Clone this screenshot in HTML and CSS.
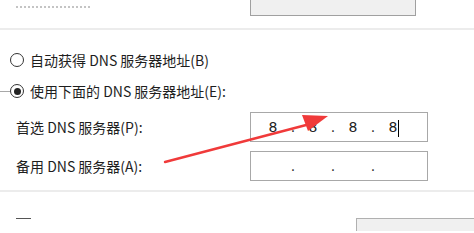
FILE: index.html
```html
<!DOCTYPE html>
<html lang="zh-CN">
<head>
    <meta charset="UTF-8">
    <title>DNS 设置</title>
    <link rel="stylesheet" href="styles.css">
</head>
<body>
    <div class="dialog">
        <!-- 上一组（被截掉的部分） -->
        <div class="top-row">
            <div class="top-label"><span class="faint"></span></div>
            <div class="top-box"></div>
        </div>
        <div class="divider"></div>

        <section class="dns-group">
            <label class="radio-row">
                <span class="radio"></span>
                <span>自动获得 DNS 服务器地址(B)</span>
            </label>
            <label class="radio-row legend">
                <span class="radio checked"></span>
                <span>使用下面的 DNS 服务器地址(E):</span>
            </label>

            <div class="field-row">
                <div class="field-label">首选 DNS 服务器(P):</div>
                <div class="ip-box">
                    <span class="oct">8</span><span class="dot">.</span>
                    <span class="oct">8</span><span class="dot">.</span>
                    <span class="oct">8</span><span class="dot">.</span>
                    <span class="oct">8<i class="caret"></i></span>
                </div>
            </div>
            <div class="field-row">
                <div class="field-label">备用 DNS 服务器(A):</div>
                <div class="ip-box">
                    <span class="oct"></span><span class="dot">.</span>
                    <span class="oct"></span><span class="dot">.</span>
                    <span class="oct"></span><span class="dot">.</span>
                    <span class="oct"></span>
                </div>
            </div>

            <!-- 红色箭头标注 -->
            <svg class="arrow" width="474" height="233" viewBox="0 0 474 233">
                <path d="M165 162 L310 124" stroke="#f03a3a" stroke-width="2.4" stroke-linecap="round" fill="none"/>
                <path d="M328 116 L302 115 L308 131 Z" fill="#f03a3a"/>
            </svg>
        </section>

        <div class="divider bottom"></div>

        <div class="bottom-row">
            <div class="bottom-mark"></div>
            <div class="bottom-box"></div>
        </div>
    </div>
</body>
</html>
```

FILE: styles.css
```css
body {
    margin: 0;
    background: #fff;
    font-family: "Noto Sans CJK SC", "Noto Sans", sans-serif;
    font-size: 14px;
    color: #1e1e1e;
    overflow: hidden;
}

.dialog {
    position: relative;
    width: 474px;
    height: 233px;
}

/* 顶部被截断的一行 */
.top-row {
    display: flex;
    align-items: flex-start;
    height: 28px;
}

.top-label {
    width: 234px;
    height: 10px;
    padding-left: 16px;
}

.faint {
    display: block;
    width: 74px;
    margin-top: 6px;
    border-bottom: 2px dotted #c4c4c4;
}

.top-box {
    width: 164px;
    height: 15px;
    background: #f0f0f0;
    border: 1px solid #a0a0a0;
    border-top: none;
}

.divider {
    height: 2px;
    background: #ececec;
}

/* DNS 分组 */
.dns-group {
    padding-top: 20px;
}

.radio-row {
    display: flex;
    align-items: center;
    gap: 6px;
    height: 20px;
    padding-left: 10px;
    margin-bottom: 11px;
    position: relative;
}

.legend::before {
    content: "";
    position: absolute;
    left: 0;
    top: 10px;
    width: 10px;
    height: 1px;
    background: #a8a8a8;
}

.radio {
    width: 12px;
    height: 12px;
    border: 1px solid #333;
    border-radius: 50%;
    display: flex;
    align-items: center;
    justify-content: center;
}

.radio.checked::after {
    content: "";
    width: 7px;
    height: 7px;
    border-radius: 50%;
    background: #222;
}

.field-row {
    display: flex;
    align-items: center;
    height: 30px;
    margin-bottom: 9px;
}

.field-label {
    width: 234px;
    padding-left: 16px;
}

.ip-box {
    width: 164px;
    height: 28px;
    border: 1px solid #a8a8a8;
    display: flex;
    align-items: center;
    padding-left: 12px;
    box-sizing: content-box;
    font-family: "DejaVu Sans", sans-serif;
    font-size: 14px;
    color: #222;
}

.oct {
    width: 20px;
    text-align: center;
    position: relative;
}

.dot {
    width: 20px;
    text-align: center;
    color: #333;
}

.caret {
    position: absolute;
    right: 4px;
    top: 1px;
    width: 1px;
    height: 17px;
    background: #000;
}

.arrow {
    position: absolute;
    left: 0;
    top: 0;
    pointer-events: none;
}

.divider.bottom {
    margin-top: 3px;
}

.bottom-row {
    display: flex;
    justify-content: space-between;
    align-items: flex-start;
    padding-top: 26px;
}

.bottom-mark {
    width: 15px;
    height: 1px;
    margin-left: 16px;
    background: #555;
}

.bottom-box {
    width: 117px;
    height: 12px;
    border-top: 1px solid #b0b0b0;
    border-left: 1px solid #b0b0b0;
    background: #f0f0f0;
}
```
